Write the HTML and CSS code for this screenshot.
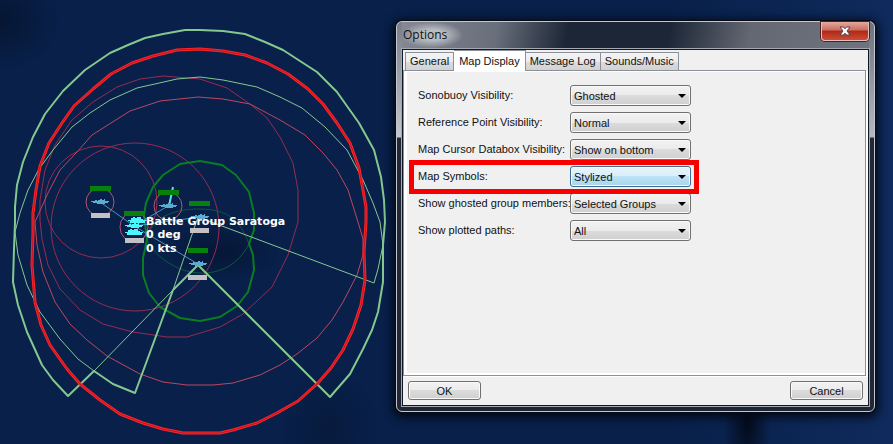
FILE: index.html
```html
<!DOCTYPE html>
<html lang="en">

<head>
    <meta charset="UTF-8">
    <meta name="viewport" content="width=device-width, initial-scale=1.0">
    <title>Options</title>
    <link rel="stylesheet" href="styles.css">
</head>

<body>

    <svg class="map" role="img" aria-label="Battle Group Saratoga">
        <defs>
            <path id="ship" d="M-9 -1 H-5 V-2 H-3 V-1 H-2 V-2 H0 V-3 H2 V-2 H4 V-3 H5 V-1 H9 V0 H8 V1 H5 V2 H-3 V1 H-7 V0 H-9 Z" />
            <path id="ship-big" d="M-9 0 H-6 V-2 H-4 V-3 H-2 V-2 H0 V-3 H4 V-1 H6 V0 H9 V1 H8 V3 H-7 V1 H-9 Z" />
        </defs>

        <!-- weapon ranges -->
        <g class="range">
            <circle cx="101" cy="202" r="56" />
            <circle cx="135" cy="227" r="84" />
            <polygon points="163,76 140,79 117,87 93,102 72,120 55,145 45,170 40,200 40,220 42,239 48,265 60,289 80,310 103,324 133,332 167,337 187,337 220,327 243,314 272,287 288,255 298,222 298,190 293,163 280,137 267,118 250,104 227,88 200,79" />
            <polygon class="range-near" points="198,97 160,101 130,111 92,135 77,152 60,170 48,193 39,213 35,222 37,245 43,272 55,302 70,324 87,340 107,356 140,374 163,382 187,385 213,385 233,383 260,375 280,365 297,354 317,338 332,320 343,302 357,275 363,255 363,239 358,222 348,190 337,170 323,153 305,135 280,120 250,104 223,99" />
        </g>

        <!-- sonar -->
        <g class="sonar">
            <path class="sonar-inner" d="M147 240 C150 220 170 209 199 209 S240 220 249 244 C238 265 220 274 199 273 S156 258 147 240" />
            <polygon points="200,161 180,164 163,175 153,187 146,203 144,215 147,240 143,258 143,275 149,293 160,307 180,318 200,321 220,317 237,306 248,292 254,270 253,255 249,244 254,230 254,213 249,192 236,175 222,165" />
        </g>

        <!-- radar -->
        <g class="radar">
            <polyline class="thin" points="94,371 78,359 60,339 40,312 27,285 18,255 15,232 20,213 28,190 39,169 53,150 72,127 90,113 110,100 137,88 177,79 200,77 223,80 257,87 280,97 302,108 325,127 347,150 363,180 373,203 380,222 383,245 378,269 374,283 198,217 173,290 94,371" />
            <polyline points="173,290 135,393 113,384 94,371 68,396 53,380 42,365 27,332 18,305 13,282 14,249 15,222 15,207 17,185 23,162 33,137 45,114 63,91 85,70 110,53 128,45 145,38 163,34 185,30 200,30 223,31 245,34 265,42 283,50 317,72 337,92 359,123 374,150 381,177 384,200 385,222 383,245 383,282 378,312 372,330 363,349 350,374 330,397 198,265 173,290" />
        </g>

        <g class="strike">
            <polygon id="strike" points="200,49 177,50 153,56 132,63 111,74 93,89 74,106 62,123 49,143 40,166 36,190 33,213 33,232 32,265 35,302 41,325 50,345 67,369 80,384 100,400 120,414 143,423 163,429 183,433 220,433 233,430 257,423 277,413 298,401 317,384 331,368 343,350 353,329 361,305 365,280 364,252 366,222 366,207 363,190 359,168 350,143 337,123 323,104 308,89 288,74 267,63 245,55 223,51" />
            <use href="#strike" class="strike-core" />
        </g>

        <g class="halo">
            <ellipse cx="100" cy="202" rx="14" ry="14" />
            <ellipse cx="168" cy="206" rx="14" ry="14" />
            <ellipse cx="134" cy="227" rx="14" ry="15" />
        </g>

        <!-- formation links -->
        <polyline class="link" points="100,202 134,226 198,264" />
        <polyline class="link" points="168,206 134,226 200,217" />
        <line class="course" x1="169" y1="206" x2="173" y2="187" />

        <g class="health">
            <rect x="90" y="186" width="21" height="5" />
            <rect x="158" y="190" width="21" height="5" />
            <rect x="124" y="211" width="20" height="5" />
            <rect x="189" y="201" width="21" height="5" />
            <rect x="188" y="248" width="20" height="5" />
        </g>
        <g class="status">
            <rect x="91" y="213" width="19" height="5" />
            <rect x="125" y="238" width="19" height="5" />
            <rect x="190" y="228" width="19" height="5" />
            <rect x="188" y="275" width="19" height="5" />
        </g>
        <g class="unit">
            <use href="#ship" x="100" y="202" />
            <use href="#ship" x="168" y="206" />
            <use href="#ship" x="200" y="217" />
            <use href="#ship" x="198" y="264" />
        </g>
        <g class="unit-selected">
            <use href="#ship-big" x="137" y="220" />
            <use href="#ship" x="134" y="226" />
            <use href="#ship-big" x="134" y="232" />
        </g>

        <g class="unit-label">
            <text x="146" y="225">Battle Group Saratoga</text>
            <text x="146" y="238">0 deg</text>
            <text x="146" y="252">0 kts</text>
        </g>
    </svg>

    <form class="dialog" aria-labelledby="title">
        <div class="titlebar">
            <span id="title" class="title">Options</span>
            <button type="button" class="close" aria-label="Close">
                <svg width="12" height="10" viewBox="0 0 12 10">
                    <path d="M1 1 H4.5 L6 2.8 L7.5 1 H11 L8 5 L11 9 H7.5 L6 7.2 L4.5 9 H1 L4 5 Z" />
                </svg>
            </button>
        </div>

        <div class="client">
            <div class="tabs" role="tablist">
                <button type="button" class="tab" role="tab">General</button>
                <button type="button" class="tab active" role="tab" aria-selected="true">Map Display</button>
                <button type="button" class="tab" role="tab">Message Log</button>
                <button type="button" class="tab" role="tab">Sounds/Music</button>
            </div>

            <div class="panel" role="tabpanel">
                <div class="row">
                    <label for="sonobuoy">Sonobuoy Visibility:</label>
                    <div class="select">
                        <select id="sonobuoy"><option>Ghosted</option></select>
                    </div>
                </div>
                <div class="row">
                    <label for="refpoint">Reference Point Visibility:</label>
                    <div class="select">
                        <select id="refpoint"><option>Normal</option></select>
                    </div>
                </div>
                <div class="row">
                    <label for="databox">Map Cursor Databox Visibility:</label>
                    <div class="select">
                        <select id="databox"><option>Show on bottom</option></select>
                    </div>
                </div>
                <div class="row marked">
                    <label for="symbols">Map Symbols:</label>
                    <div class="select">
                        <select id="symbols"><option>Stylized</option></select>
                    </div>
                </div>
                <div class="row">
                    <label for="members">Show ghosted group members:</label>
                    <div class="select">
                        <select id="members"><option>Selected Groups</option></select>
                    </div>
                </div>
                <div class="row">
                    <label for="paths">Show plotted paths:</label>
                    <div class="select">
                        <select id="paths"><option>All</option></select>
                    </div>
                </div>
            </div>

            <div class="footer">
                <button type="button" class="btn">OK</button>
                <button type="button" class="btn">Cancel</button>
            </div>
        </div>
    </form>

</body>

</html>
```
FILE: styles.css
```css
*,
*::before {
    box-sizing: border-box;
}

body {
    position: relative;
    min-height: 100vh;
    margin: 0;
    overflow: hidden;
    font-family: "Liberation Sans", Arial, sans-serif;
    font-size: 11px;
    color: #111;
    background-color: #08204a;
    background-image:
        radial-gradient(ellipse 60px 50px at 0 20px, #061632, transparent),
        radial-gradient(ellipse 60px 30px at 220px 252px, #061636, transparent),
        radial-gradient(ellipse 24px 60px at 747px 425px, #040b1c, transparent),
        radial-gradient(ellipse 50px 60px at 330px 430px, #071a3c, transparent),
        linear-gradient(90deg, transparent 75%, #0f2a5c);
}

/* map */
.map {
    position: absolute;
    top: 0;
    left: 0;
    width: 100%;
    height: 100%;
    fill: none;
    stroke-linejoin: round;
}

.range {
    stroke: #962c50;
}

.range-near {
    stroke: #bc4860;
}

.sonar {
    stroke: #0a7c22;
    stroke-width: 2;
}

.sonar-inner {
    stroke: #0e5840;
    stroke-width: 1;
}

.radar {
    stroke: #84c890;
    stroke-width: 2;
}

.thin {
    stroke-width: 1;
}

.strike {
    stroke: #ff2424;
    stroke-width: 3;
}

.strike-core {
    stroke: #c01428;
    stroke-width: 1;
}

.halo {
    stroke: #b4586c;
}

.link {
    stroke: #4498bc;
}

.course {
    stroke: #58e0f0;
    stroke-width: 2;
}

.health {
    fill: #08800c;
}

.status {
    fill: #c4c0c4;
}

.unit {
    fill: #5cacd0;
}

.unit-selected {
    fill: #4cf4fc;
}

.unit-label {
    fill: #fff;
    font-family: "DejaVu Sans", Verdana, sans-serif;
    font-size: 11px;
    font-weight: bold;
}

/* window */
.dialog {
    position: absolute;
    top: 21px;
    right: 18px;
    bottom: 32px;
    left: 396px;
    display: flex;
    flex-direction: column;
    padding: 0 4px 4px;
    border: 1px solid #c4c8cc;
    border-radius: 6px;
    background:
        linear-gradient(180deg, #777e8a, #c4c8cc 115px, #202838 116px) 0 0 / 5px 100% no-repeat,
        linear-gradient(180deg, #6c727e, #b4b8c0 115px, #202838 116px) 100% 0 / 5px 100% no-repeat,
        linear-gradient(100deg, #858a94 0, #686e7a 100px, #1c2636 170px, #1c2636 270px, #646872 350px, #70747e 100%) 0 0 / 100% 28px no-repeat,
        #1c2636;
    box-shadow: 0 0 0 1px #050a14, 0 2px 10px 3px #030814;
}

.titlebar {
    display: flex;
    justify-content: space-between;
    align-items: flex-start;
    height: 26px;
}

.title {
    padding: 0 16px 0 2px;
    line-height: 26px;
    font-family: "Open Sans", "Segoe UI", sans-serif;
    font-size: 12px;
    background: radial-gradient(closest-side, #b8bcc2 40%, transparent);
}

.close {
    display: flex;
    align-items: center;
    justify-content: center;
    width: 48px;
    height: 19px;
    margin-right: 1px;
    padding: 0;
    border: 1px solid #e4c0bc;
    border-top: 0;
    border-radius: 0 0 4px 4px;
    background: linear-gradient(#e4a8a0, #cc6c5c 45%, #b02818 50%, #cc4c34);
    box-shadow: 0 0 0 1px #4c2028;
}

.close path {
    fill: #fff;
    stroke: #504450;
}

.client {
    display: flex;
    flex: 1;
    flex-direction: column;
    border: 1px solid #a4a8b0;
    background: #f0f0f0;
    box-shadow: inset 0 0 0 1px #101824;
    padding: 1px;
}

.tabs {
    display: flex;
    align-items: flex-end;
    height: 20px;
    padding-left: 2px;
}

.tab {
    height: 18px;
    padding: 0 4px;
    border: 1px solid #8c9098;
    border-bottom: 0;
    border-left-width: 0;
    color: #111;
    font: inherit;
    line-height: 17px;
    background: linear-gradient(#f4f4f4, #ececec 50%, #dcdcdc 50%, #d2d2d2);
}

.tab:first-child {
    border-left-width: 1px;
}

.tab.active {
    z-index: 1;
    height: 21px;
    margin-bottom: -1px;
    padding: 0 5px;
    background: #fff;
}

.panel {
    flex: 1;
    margin-right: 2px;
    padding: 14px 10px 0 14px;
    border: 1px solid #8c9098;
    background: #f0f0f0;
    box-shadow: inset 3px -2px 0 #fff, inset 0 1px 0 #fff, 2px 1px 0 #fff;
}

.row {
    position: relative;
    display: flex;
    height: 21px;
    margin-bottom: 6px;
}

.row label {
    width: 152px;
    line-height: 20px;
    white-space: nowrap;
}

/* red frame around the option */
.marked::before {
    content: "";
    position: absolute;
    top: -6px;
    left: -9px;
    z-index: 1;
    width: 290px;
    height: 34px;
    border: 5px solid #f80000;
    pointer-events: none;
}

.select {
    position: relative;
    width: 121px;
}

.select::after {
    content: "";
    position: absolute;
    top: 9px;
    right: 5px;
    border: 4px solid transparent;
    border-top-color: #000;
    border-bottom: 0;
    pointer-events: none;
}

.select select,
.btn {
    border: 1px solid #707070;
    border-radius: 3px;
    color: #111;
    font: inherit;
    background: linear-gradient(#f2f2f2, #ebebeb 50%, #dcdcdc 50%, #cfcfcf);
    box-shadow: inset 0 0 0 1px #fafafa;
}

.select select {
    display: block;
    width: 100%;
    height: 21px;
    padding: 0 3px;
    appearance: none;
}

.marked .select select {
    border-color: #3c6c90;
    background: linear-gradient(#e8f4fc, #d8eefa 50%, #bee2f6 50%, #a8d4ec);
}

.footer {
    display: flex;
    justify-content: space-between;
    padding: 5px;
}

.btn {
    width: 73px;
    height: 19px;
    padding: 0;
}
```
